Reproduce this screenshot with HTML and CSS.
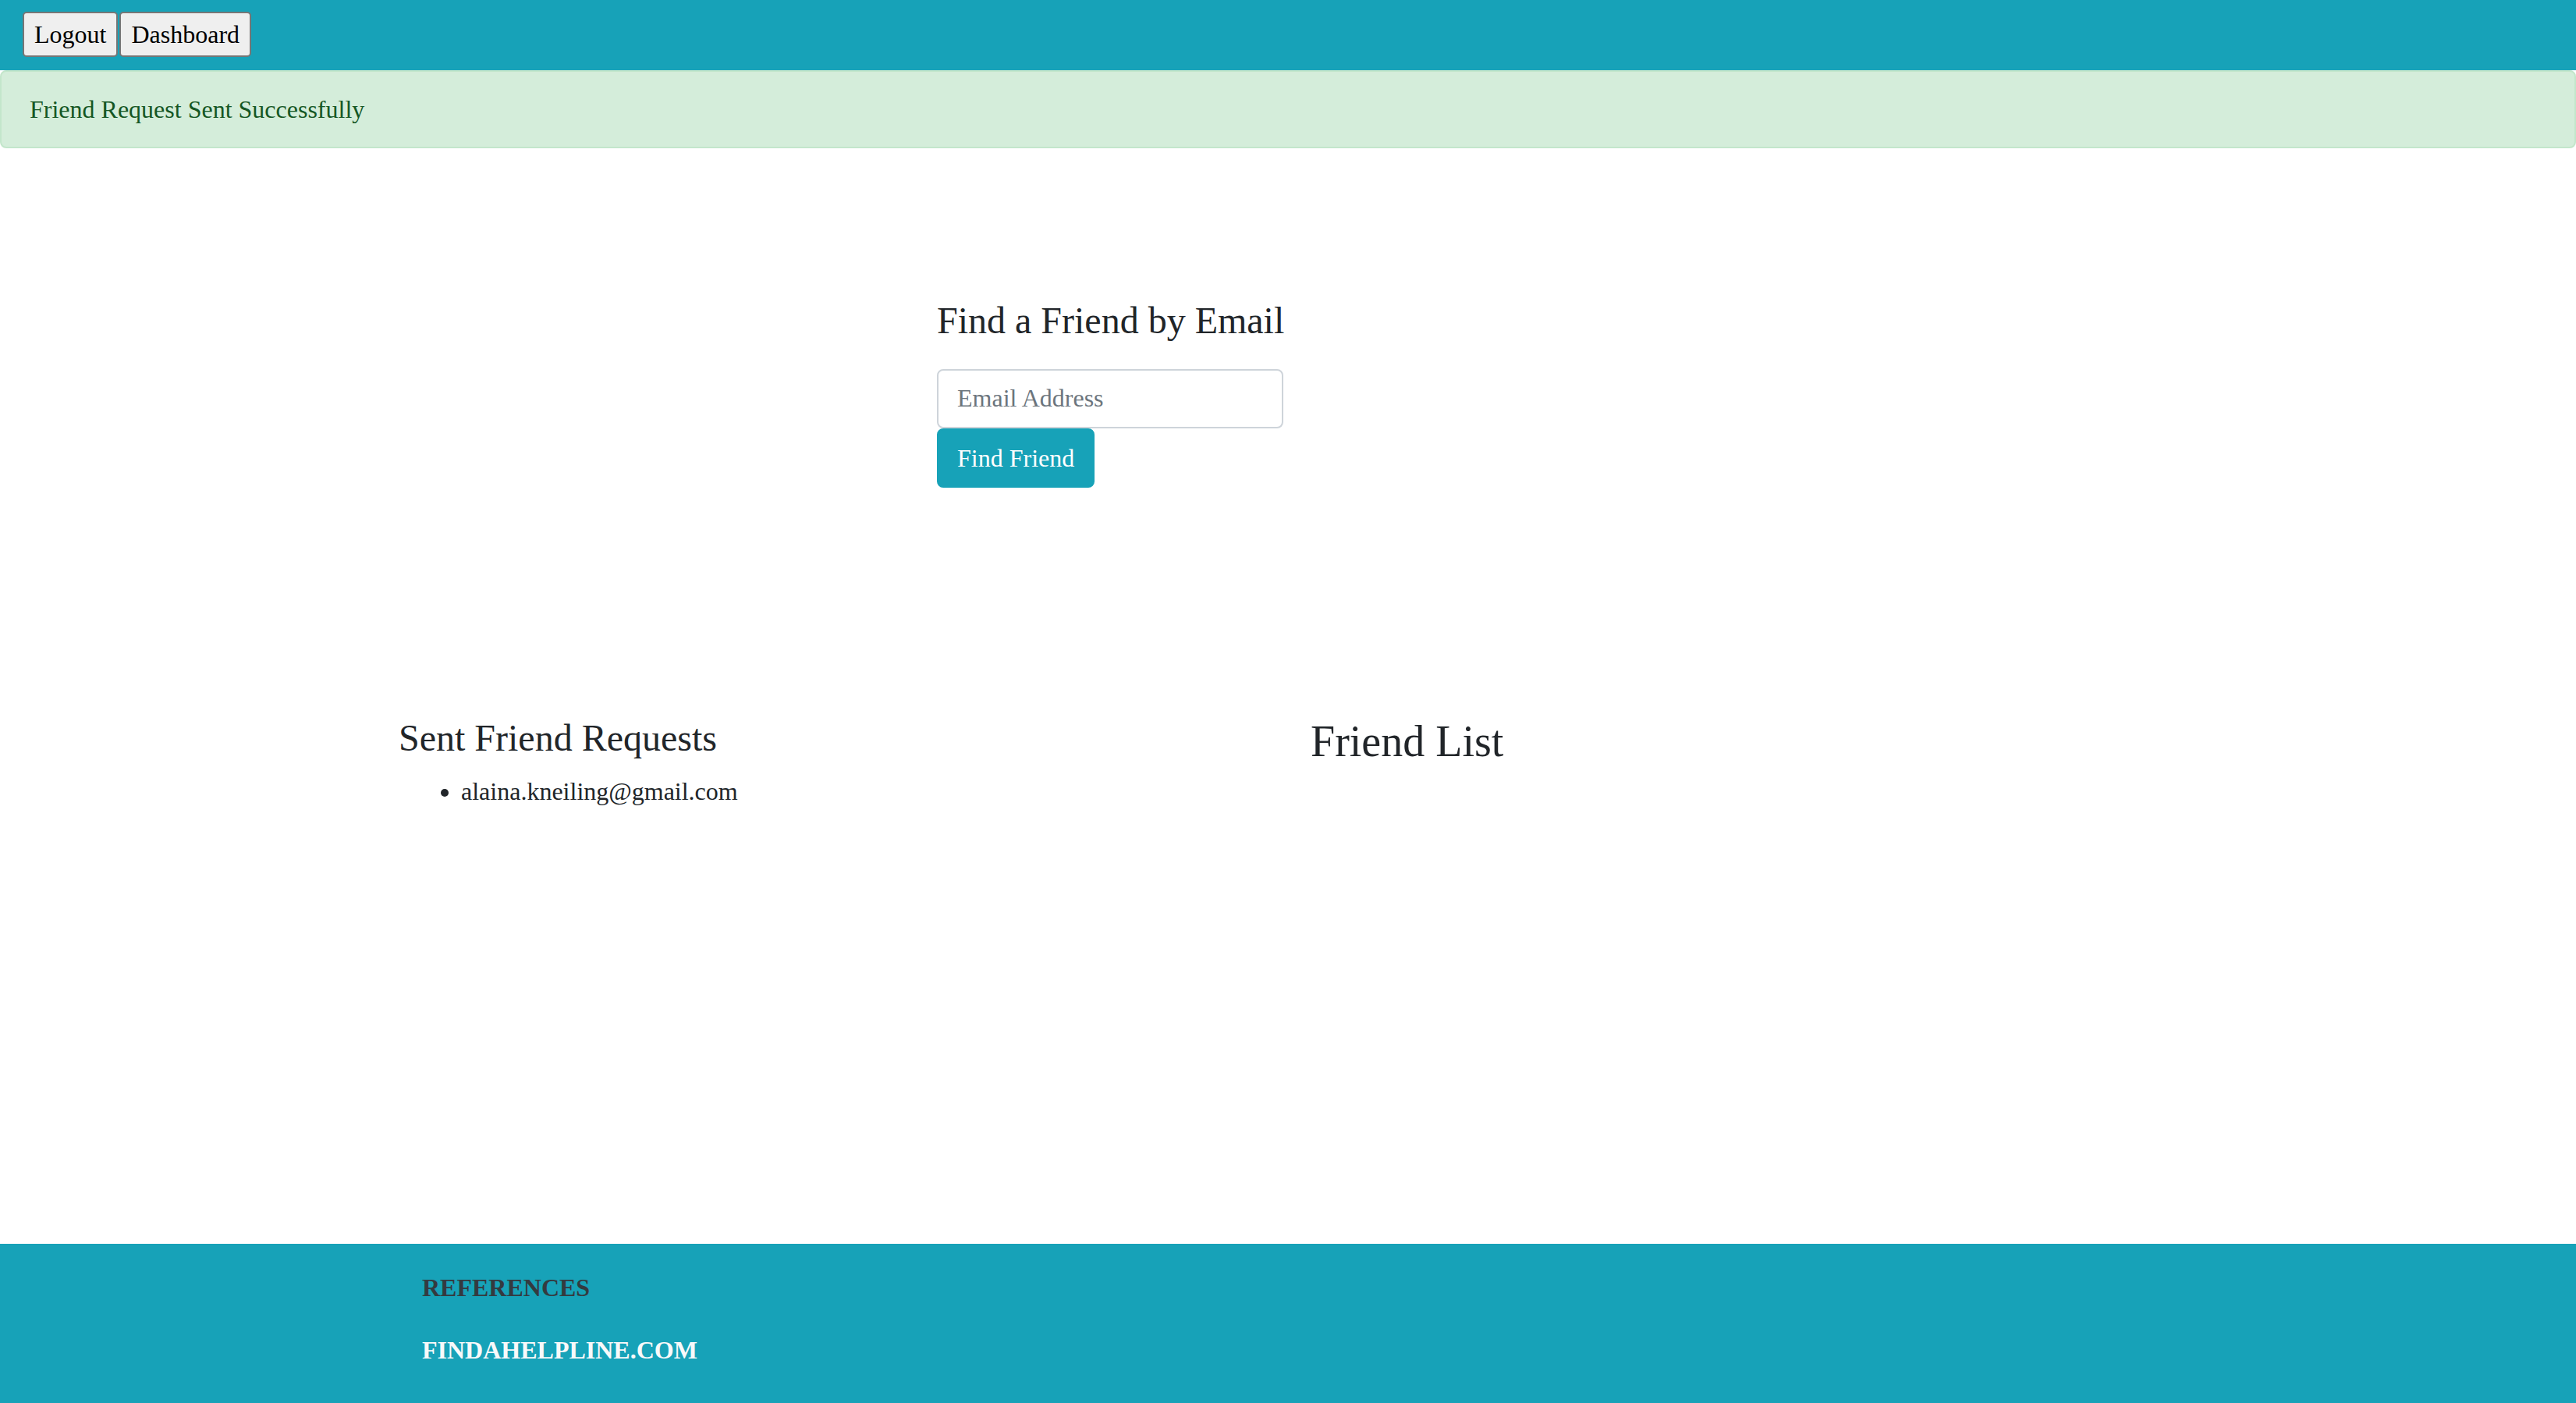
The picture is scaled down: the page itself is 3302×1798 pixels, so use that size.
FILE: index.html
```html
<!DOCTYPE html>
<html lang="en">
<head>
<meta charset="utf-8">
<title>Find a Friend</title>
<link rel="stylesheet" href="styles.css">
</head>
<body>
  <nav class="navbar">
    <button class="nav-btn" type="button">Logout</button>
    <button class="nav-btn" type="button">Dashboard</button>
  </nav>
  <div class="alert">Friend Request Sent Successfully</div>
  <main class="main">
    <section class="finder">
      <form class="finder-form">
        <h4 class="finder-title">Find a Friend by Email</h4>
        <input class="form-control" type="email" placeholder="Email Address">
        <button class="btn-find" type="button">Find Friend</button>
      </form>
    </section>
    <section class="lists">
      <div class="col col-sent">
        <h4 class="sent-title">Sent Friend Requests</h4>
        <ul class="sent-list">
          <li>alaina.kneiling@gmail.com</li>
        </ul>
      </div>
      <div class="col col-friends">
        <h3 class="friends-title">Friend List</h3>
      </div>
    </section>
  </main>
  <footer class="footer">
    <div class="footer-inner">
      <div class="footer-heading">REFERENCES</div>
      <div class="footer-link">FINDAHELPLINE.COM</div>
    </div>
  </footer>
</body>
</html>
```
FILE: styles.css
```css
* {
  box-sizing: border-box;
}

html, body {
  margin: 0;
  padding: 0;
}

body {
  min-height: 100vh;
  display: flex;
  flex-direction: column;
  font-family: "Liberation Serif", "Times New Roman", serif;
  font-size: 32px;
  line-height: 48px;
  color: #212529;
  background: #ffffff;
}

.navbar {
  height: 90px;
  background: #17a2b8;
  display: flex;
  align-items: flex-start;
  gap: 2px;
  padding: 15px 0 0 29px;
}

.nav-btn {
  font-family: "Liberation Serif", "Times New Roman", serif;
  font-size: 32px;
  line-height: 54px;
  height: 58px;
  padding: 0 13px;
  margin: 0;
  background: #efefef;
  color: #000000;
  border: 2px solid #767676;
  border-radius: 5px;
}

.alert {
  background: #d4edda;
  color: #155724;
  border: 2px solid #c3e6cb;
  border-radius: 8px;
  padding: 24px 36px;
  line-height: 48px;
  height: 100px;
}

.main {
  flex: 1;
}

.finder {
  padding: 192px 0 0 1201px;
}

.finder-form {
  display: flex;
  flex-direction: column;
  align-items: flex-start;
  width: 445px;
  margin: 0;
}

.finder-title {
  font-size: 48px;
  font-weight: normal;
  line-height: 57.6px;
  margin: 0 0 33px 0;
  white-space: nowrap;
}

.form-control {
  display: block;
  width: 444px;
  height: 76px;
  padding: 12px 24px;
  font-family: "Liberation Serif", "Times New Roman", serif;
  font-size: 32px;
  line-height: 48px;
  color: #495057;
  background: #ffffff;
  border: 2px solid #ced4da;
  border-radius: 8px;
  margin: 0;
}

.form-control::placeholder {
  color: #6c757d;
  opacity: 1;
}

.btn-find {
  height: 76px;
  padding: 12px 24px;
  font-family: "Liberation Serif", "Times New Roman", serif;
  font-size: 32px;
  line-height: 48px;
  color: #ffffff;
  background: #17a2b8;
  border: 2px solid #17a2b8;
  border-radius: 8px;
  margin: 0;
}

.lists {
  width: 2280px;
  margin: 292px auto 0 auto;
  display: grid;
  grid-template-columns: 1140px 1140px;
}

.col-sent {
  padding: 0;
}

.col-friends {
  padding: 0 0 0 29px;
}

.sent-title {
  font-size: 48px;
  font-weight: normal;
  line-height: 57.6px;
  margin: 0 0 16px 0;
}

.sent-list {
  margin: 0;
  padding-left: 80px;
}

.friends-title {
  font-size: 56px;
  font-weight: normal;
  line-height: 67.2px;
  margin: 0;
}

.footer {
  background: #17a2b8;
}

.footer-inner {
  width: 2280px;
  margin: 0 auto;
  padding: 32px 30px 44px 30px;
  display: flex;
  flex-direction: column;
  gap: 32px;
  font-weight: bold;
}

.footer-heading {
  color: #343a40;
}

.footer-link {
  color: #f8f9fa;
}
```
